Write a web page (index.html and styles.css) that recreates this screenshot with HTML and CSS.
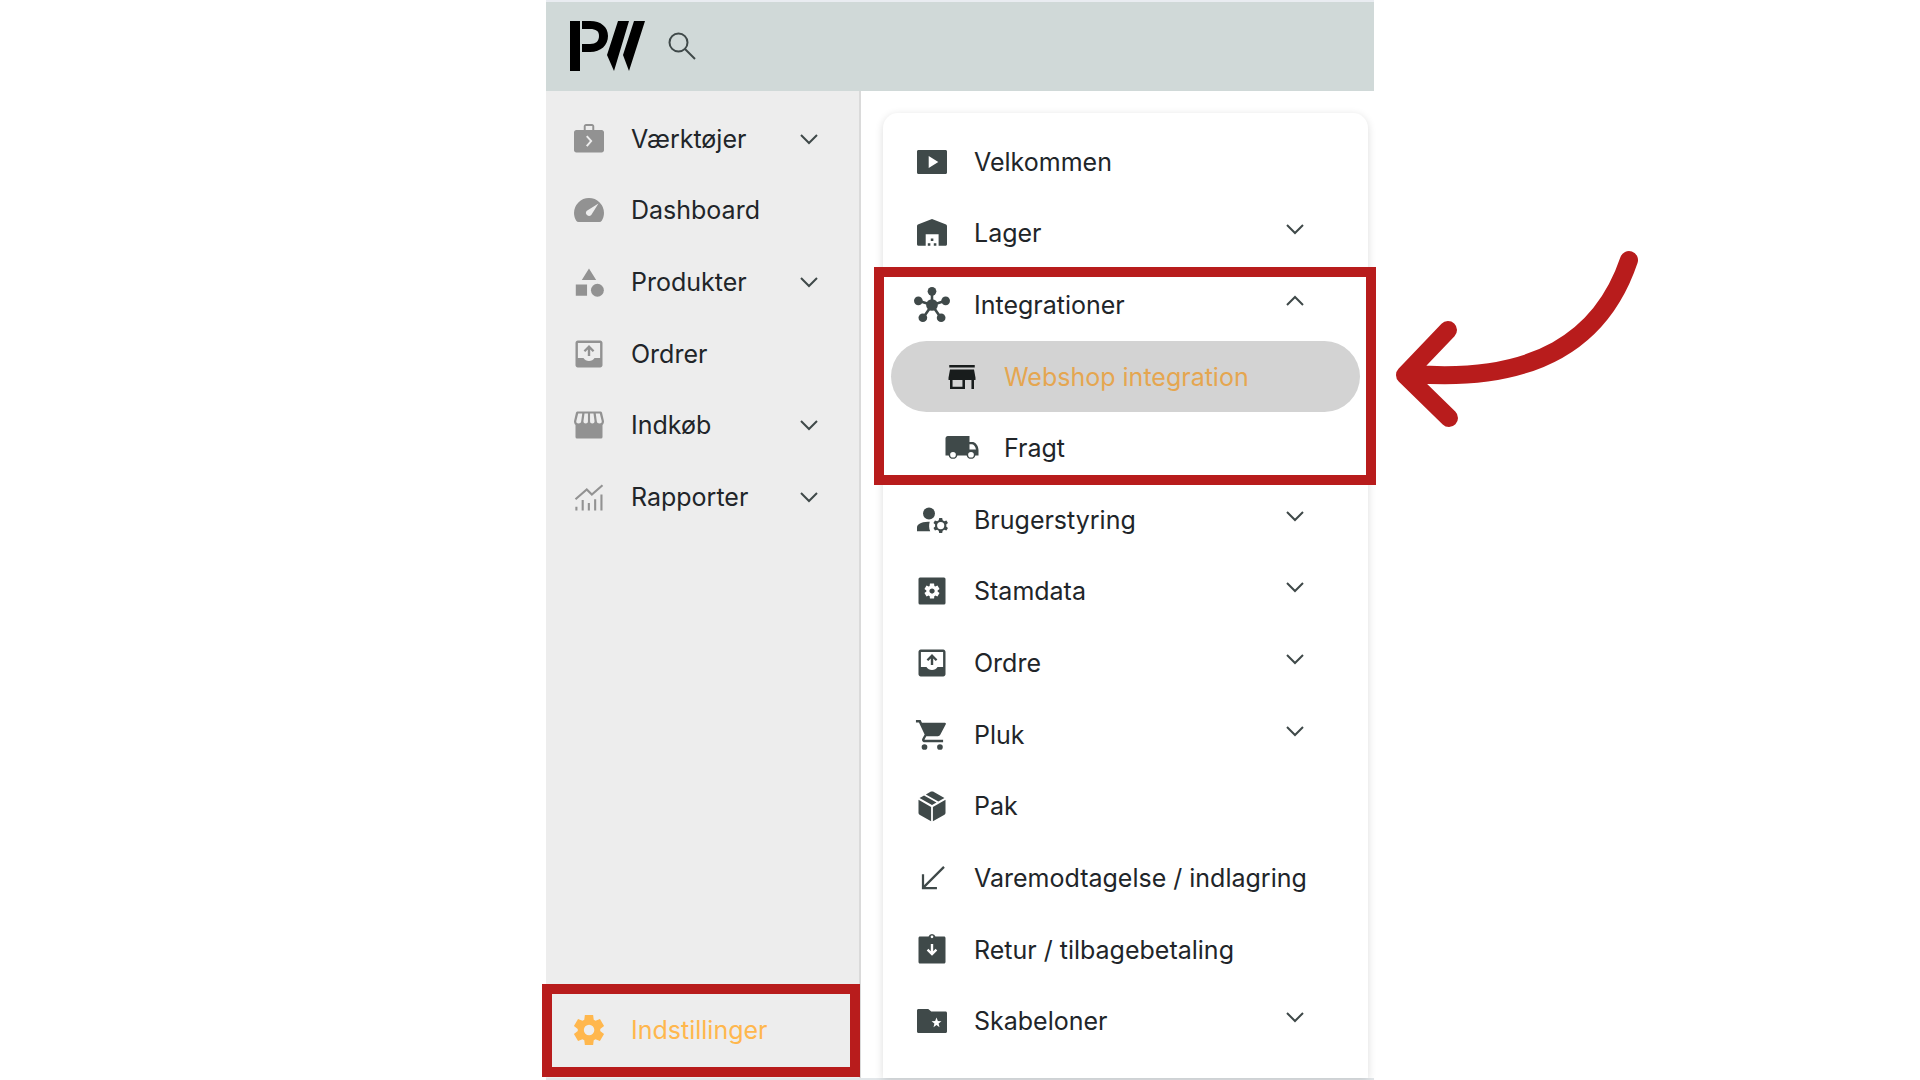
FILE: index.html
```html
<!DOCTYPE html>
<html lang="da">

<head>
    <meta charset="UTF-8">
    <meta name="viewport" content="width=device-width, initial-scale=1.0">
    <title>Webshop integration</title>
    <link rel="stylesheet" href="styles.css">
</head>

<body>

    <!-- Icon sprite -->
    <svg class="sprite" aria-hidden="true">
        <symbol id="tools" viewBox="0 0 24 24"><path fill-rule="evenodd" d="M8.5 6V3.5C8.5 2.700 9.200 2 10 2h4c.8 0 1.500.7 1.500 1.500V6h5c.8 0 1.500.7 1.500 1.500v12c0 .8-.7 1.500-1.500 1.500h-17C2.700 21 2 20.300 2 19.500v-12C2 6.700 2.700 6 3.500 6zM9.800 6h4.400V3.300H9.800zM10 16.300 12.600 13.400 10 10.500 11 9.600 14.300 13.400 11 17.200z"/></symbol>
        <symbol id="gauge" viewBox="0 0 24 24"><path fill-rule="evenodd" d="M12 4A10 10 0 0 0 2 14c0 1.900.6 3.800 1.500 5.200.4.5.9.8 1.500.8h14c.6 0 1.100-.3 1.500-.8.9-1.400 1.500-3.300 1.500-5.200A10 10 0 0 0 12 4zM18.300 7.700 13.500 15.300a2 2 0 1 1-2.900-2.800z"/></symbol>
        <symbol id="shapes" viewBox="0 0 24 24"><path d="M12 3l4.800 7.700H7.200zM3.200 13.700h7.500v7.500H3.200z"/><circle cx="17.600" cy="17.500" r="4.300"/></symbol>
        <symbol id="outbox" viewBox="0 0 24 24"><path fill-rule="evenodd" d="M4.500 3h15c.8 0 1.500.7 1.500 1.500v15c0 .8-.7 1.500-1.500 1.500h-15c-.8 0-1.500-.7-1.500-1.500v-15C3 3.700 3.700 3 4.500 3zM4.600 4.600v10h3.700c.8 1.200 2.100 2 3.700 2s2.900-.8 3.700-2h3.700v-10z"/><path d="M11.200 13.300V9l-1.700 1.700-1.100-1.100L12 6l3.600 3.600-1.100 1.100L12.800 9v4.300z"/></symbol>
        <symbol id="shop" viewBox="0 0 24 24"><path fill-rule="evenodd" d="M4.500 3h15c.6 0 1 .3 1.200.9L22 9.500c0 1-.3 1.800-1 2.500v8a1 1 0 0 1-1 1H4a1 1 0 0 1-1-1v-8c-.7-.7-1-1.500-1-2.500l1.300-5.600C3.500 3.300 4 3 4.500 3zM4.800 4.400 3.500 9.500c0 1 .5 1.500 1.500 1.500s1.700-.6 1.800-1.500l.7-5.100zM9 4.400l-.7 5.100c0 1 .6 1.500 1.500 1.500s1.500-.6 1.500-1.500V4.400zM12.700 4.400v5.100c0 .9.6 1.500 1.500 1.500s1.500-.5 1.500-1.500L15 4.400zM16.500 4.400l.7 5.100c.1.900.8 1.500 1.800 1.500s1.500-.5 1.500-1.500l-1.300-5.100z"/></symbol>
        <symbol id="chart" viewBox="0 0 24 24"><path fill="none" stroke="currentColor" stroke-width="1.400" d="M3 13.500 10.500 7l3.400 3.400L21 4.200M3.600 21v-2.500M7.800 21v-7M11.900 21v-5M16.100 21v-7.500M20.300 21V10.300"/></symbol>
        <symbol id="gear" viewBox="0 0 24 24"><path fill-rule="evenodd" d="m9.250 22l-.4-3.200q-.325-.125-.612-.3t-.563-.375L4.700 19.375l-2.750-4.750l2.575-1.950Q4.500 12.500 4.500 12.338v-.675q0-.163.025-.338L1.950 9.375l2.750-4.750l2.975 1.250q.275-.2.575-.375t.6-.3l.4-3.200h5.500l.4 3.200q.325.125.613.3t.562.375l2.975-1.250l2.750 4.750l-2.575 1.950q.025.175.025.338v.674q0 .163-.05.338l2.575 1.950l-2.750 4.750l-2.950-1.250q-.275.2-.575.375t-.6.3l-.4 3.200zm2.800-6.500q1.450 0 2.475-1.025T15.550 12t-1.025-2.475T12.050 8.500q-1.475 0-2.488 1.025T8.550 12t1.013 2.475T12.050 15.500z"/></symbol>
        <symbol id="play" viewBox="0 0 24 24"><path fill-rule="evenodd" d="M3 4h18c.6 0 1 .4 1 1v14c0 .6-.4 1-1 1H3c-.6 0-1-.4-1-1V5c0-.6.4-1 1-1zM9.800 8v8l6.400-4z"/></symbol>
        <symbol id="warehouse" viewBox="0 0 24 24"><path d="M12 2.700 21 6.200c.6.3 1 .7 1 1.300v12c0 .6-.4 1-1 1h-4.600v-7.700H7.800v7.700H3c-.6 0-1-.4-1-1v-12c0-.6.4-1 1-1.300z"/><path d="M11.200 15.700h1.700v1.700h-1.700zM9.200 18.800h1.700v1.700H9.200zM13.200 18.800h1.700v1.700h-1.700z"/></symbol>
        <symbol id="hub" viewBox="0 0 24 24"><path stroke="currentColor" stroke-width="1.700" fill="none" d="M12 12V3M12 12 3 9.200M12 12l9-2.800M12 12l-6 8.600M12 12l6 8.600"/><circle cx="12" cy="12" r="3.900"/><circle cx="12" cy="2.900" r="2.900"/><circle cx="2.900" cy="9.200" r="2.900"/><circle cx="21.100" cy="9.200" r="2.900"/><circle cx="5.900" cy="20.500" r="2.900"/><circle cx="18.100" cy="20.500" r="2.900"/></symbol>
        <symbol id="store" viewBox="0 0 24 24"><path fill-rule="evenodd" d="M20.500 4h-17v1.700h17zM21 14v-1.500L20 7H4l-1 5.500V14h1v6h10v-6h4.300v6H20v-6zM12.300 18.500H5.700V14h6.600z"/></symbol>
        <symbol id="truck" viewBox="0 0 24 24"><path fill-rule="evenodd" d="M2.500 4H17v4h2.500c1.900.5 3.500 2.900 3.500 5.500V17h-2.100a3 3 0 0 1-5.800 0H8.900a3 3 0 0 1-5.800 0H1V5.500C1 4.700 1.700 4 2.500 4zM17 9.500V13h4.300c-.3-1.900-1.300-3.200-2.600-3.500zM6 14.600a1.900 1.900 0 1 0 0 3.800 1.900 1.900 0 1 0 0-3.800zM18 14.600a1.900 1.900 0 1 0 0 3.800 1.900 1.900 0 1 0 0-3.800z"/></symbol>
        <symbol id="user" viewBox="0 0 24 24"><circle cx="10" cy="7.700" r="4"/><path d="M10.500 13.200C7.500 13 5.300 13.600 3.400 14.600 2.500 15.100 2 16 2 17v2.500h8.800c-.9-2-.9-4.300-.3-6.300z"/><path transform="translate(.8 -.3)" fill-rule="evenodd" d="M20.750 16c0-.22-.03-.42-.06-.63l1.140-1.010-1-1.730-1.450.49c-.32-.27-.68-.48-1.080-.63L18 11h-2l-.3 1.490c-.4.150-.76.360-1.080.63l-1.450-.49-1 1.730 1.140 1.010c-.03.210-.06.410-.06.630s.03.420.06.630l-1.140 1.010 1 1.730 1.450-.49c.32.270.68.480 1.080.63L16 21h2l.3-1.490c.4-.15.76-.36 1.080-.63l1.450.49 1-1.730-1.140-1.010c.03-.21.06-.41.06-.63zM17 18.400a2.400 2.400 0 1 1 0-4.800 2.400 2.400 0 0 1 0 4.800z"/></symbol>
        <symbol id="data" viewBox="0 0 24 24"><rect x="3" y="3" width="18" height="18" rx="1"/><use href="#gear" x="6" y="6" width="12" height="12" fill="#fff"/></symbol>
        <symbol id="cart" viewBox="0 0 24 24"><path d="M7 18.100a1.900 1.900 0 1 0 0 3.800 1.900 1.900 0 1 0 0-3.800zM17.300 18.100a1.900 1.900 0 1 0 0 3.800 1.900 1.900 0 1 0 0-3.800zM1.300 2v1.600h2l3.800 8-1.500 2.700c-.7 1.300.2 2.500 1.500 2.500h12.300v-1.600H7.400c-.3 0-.4-.2-.3-.4l1.100-2h7.700c.7 0 1.300-.3 1.600-.9L21.200 4.800c.2-.5 0-1-.6-1H5.300L4.400 2z"/></symbol>
        <symbol id="package" viewBox="0 0 24 24"><path d="M3 7.900l8.400 4.700v9.500L3.700 17.800c-.4-.3-.7-.7-.7-1.200zM21 7.900l-8.400 4.700v9.500l7.700-4.300c.4-.3.7-.7.7-1.200zM12 11.400 3.700 6.700l3-1.700 8.300 4.700zM16.200 9 7.900 4.300 11.300 2.400c.5-.2.9-.2 1.400 0l7.600 4.300z"/></symbol>
        <symbol id="inbound" viewBox="0 0 24 24"><path fill="none" stroke="currentColor" stroke-width="1.500" d="M20 4.600 6 18.600M6 9.500v9.200h9.300"/></symbol>
        <symbol id="return" viewBox="0 0 24 24"><path fill-rule="evenodd" d="M4 3h5.700a2.400 2.400 0 0 1 4.600 0H20c.6 0 1 .4 1 1v16c0 .6-.4 1-1 1H4c-.6 0-1-.4-1-1V4c0-.6.4-1 1-1zM12 2.300a.9.900 0 1 0 0 1.800.9.900 0 1 0 0-1.800zM11.200 8v4.800l-1.600-1.600-1.100 1.100L12 15.800l3.500-3.500-1.100-1.100-1.600 1.600V8z"/></symbol>
        <symbol id="folder" viewBox="0 0 24 24"><path fill-rule="evenodd" d="M3 4h6.500l2 1.600H21c.6 0 1 .4 1 1V19c0 .6-.4 1-1 1H3c-.6 0-1-.4-1-1V5c0-.6.4-1 1-1zM15 9.700l-.9 2.300-2.400.1 1.900 1.600-.6 2.400 2-1.400 2 1.400-.6-2.400 1.900-1.600-2.400-.1z"/></symbol>
        <symbol id="down" viewBox="0 0 18 18"><path fill="none" stroke="currentColor" stroke-width="2" d="M1 5l8 8 8-8"/></symbol>
        <symbol id="up" viewBox="0 0 18 18"><path fill="none" stroke="currentColor" stroke-width="2" d="M1 13l8-8 8 8"/></symbol>
    </svg>

    <div class="app">

        <header class="topbar">
            <svg class="logo" viewBox="0 0 75 50" role="img" aria-label="PW">
                <path d="M0 0h10v50H0zM12 0h8c11 0 18 6 18 15s-7 16-18 16h-8v-8h8c6 0 9-3 9-8s-3-7-9-7h-8zM48 0h11L44 50 37 34zM64 0h11L59 50 53 34z"/>
            </svg>
            <button class="search" aria-label="Søg">
                <svg viewBox="0 0 28 28"><circle cx="10.500" cy="10.500" r="9"/><path d="M17 17l10 10"/></svg>
            </button>
        </header>

        <div class="content">
            <nav class="sidebar">
                <button class="item"><svg class="icon"><use href="#tools"/></svg><span>Værktøjer</span><svg class="chevron"><use href="#down"/></svg></button>
                <a class="item" href="#"><svg class="icon"><use href="#gauge"/></svg><span>Dashboard</span></a>
                <button class="item"><svg class="icon"><use href="#shapes"/></svg><span>Produkter</span><svg class="chevron"><use href="#down"/></svg></button>
                <a class="item" href="#"><svg class="icon"><use href="#outbox"/></svg><span>Ordrer</span></a>
                <button class="item"><svg class="icon"><use href="#shop"/></svg><span>Indkøb</span><svg class="chevron"><use href="#down"/></svg></button>
                <button class="item"><svg class="icon"><use href="#chart"/></svg><span>Rapporter</span><svg class="chevron"><use href="#down"/></svg></button>
                <div class="spacer"></div>
                <a class="item settings" href="#"><svg class="icon"><use href="#gear"/></svg><span>Indstillinger</span></a>
            </nav>

            <main class="main">
                <nav class="card">
                    <a class="item" href="#"><svg class="icon"><use href="#play"/></svg><span>Velkommen</span></a>
                    <button class="item"><svg class="icon"><use href="#warehouse"/></svg><span>Lager</span><svg class="chevron"><use href="#down"/></svg></button>

                    <div class="group">
                        <button class="item"><svg class="icon"><use href="#hub"/></svg><span>Integrationer</span><svg class="chevron"><use href="#up"/></svg></button>
                        <a class="item sub active" href="#"><svg class="icon"><use href="#store"/></svg><span>Webshop integration</span></a>
                        <a class="item sub" href="#"><svg class="icon"><use href="#truck"/></svg><span>Fragt</span></a>
                    </div>

                    <button class="item"><svg class="icon"><use href="#user"/></svg><span>Brugerstyring</span><svg class="chevron"><use href="#down"/></svg></button>
                    <button class="item"><svg class="icon"><use href="#data"/></svg><span>Stamdata</span><svg class="chevron"><use href="#down"/></svg></button>
                    <button class="item"><svg class="icon"><use href="#outbox"/></svg><span>Ordre</span><svg class="chevron"><use href="#down"/></svg></button>
                    <button class="item"><svg class="icon"><use href="#cart"/></svg><span>Pluk</span><svg class="chevron"><use href="#down"/></svg></button>
                    <a class="item" href="#"><svg class="icon"><use href="#package"/></svg><span>Pak</span></a>
                    <a class="item" href="#"><svg class="icon"><use href="#inbound"/></svg><span>Varemodtagelse / indlagring</span></a>
                    <a class="item" href="#"><svg class="icon"><use href="#return"/></svg><span>Retur / tilbagebetaling</span></a>
                    <button class="item"><svg class="icon"><use href="#folder"/></svg><span>Skabeloner</span><svg class="chevron"><use href="#down"/></svg></button>
                </nav>
            </main>
        </div>

        <svg class="arrow" viewBox="0 0 260 200" aria-hidden="true">
            <path d="M249 30C222 110 155 153 34 144M68 100 25 145l44 43"/>
        </svg>
    </div>

</body>

</html>
```

FILE: styles.css
```css
* {
    box-sizing: border-box;
}

body {
    margin: 0;
    background: #fff;
    color: #212529;
    font-family: Inter, "Liberation Sans", sans-serif;
    font-size: 25px;
    line-height: 32px;
}

.sprite {
    display: none;
}

.app {
    position: relative;
    display: flex;
    flex-direction: column;
    max-width: 828px;
    min-height: 100vh;
    margin: 0 auto;
    border-top: 2px solid #e9ecf1;
    border-bottom: 2px solid #e2e6e9;
}

/* Top bar */
.topbar {
    display: flex;
    align-items: center;
    gap: 23px;
    padding: 19px 24px 20px;
    background: #d0d9d8;
}

.logo {
    width: 75px;
    height: 50px;
}

.search {
    padding: 0;
    border: 0;
    background: none;
    line-height: 0;
    cursor: pointer;
}

.search svg {
    width: 28px;
    height: 28px;
    fill: none;
    stroke: #3f4949;
    stroke-width: 2;
}

.content {
    display: flex;
    flex: 1;
}

/* Menu rows, used in the sidebar and in the card */
.item {
    position: relative;
    display: flex;
    flex: 1 0 0;
    align-items: center;
    gap: 24px;
    width: 100%;
    padding: 0 0 0 25px;
    border: 0;
    background: none;
    color: inherit;
    font: inherit;
    text-align: left;
    text-decoration: none;
    white-space: nowrap;
    cursor: pointer;
}

.icon {
    flex: none;
    width: 36px;
    height: 36px;
    color: #3f4949;
    fill: currentColor;
}

.chevron {
    width: 18px;
    height: 18px;
    margin-right: 41px;
    margin-left: auto;
    color: #3f4949;
}

/* Sidebar */
.sidebar {
    display: flex;
    flex: none;
    flex-direction: column;
    width: 315px;
    padding: 12px 0;
    border-right: 2px solid #dadada;
    background: #ededed;
}

.sidebar .icon {
    color: #929292;
}

.spacer {
    flex: 6 0 0;
    margin-bottom: 32px;
}

.sidebar .settings,
.sidebar .settings .icon {
    color: #ffb74d;
}

/* Red frames */
.settings::after,
.group::after {
    content: "";
    position: absolute;
    inset: -10px -1px -11px -4px;
    border: 10px solid #b81c1c;
    pointer-events: none;
}

.group::after {
    inset: -2px -16px -1px -17px;
}

/* Settings card */
.main {
    display: flex;
    flex: 1;
    padding: 22px 6px 0 22px;
}

.card {
    display: flex;
    flex: 1;
    flex-direction: column;
    padding: 13px 8px 21px;
    border-radius: 15px 15px 0 0;
    box-shadow: 0 2px 8px rgba(0, 0, 0, 0.14);
}

.card .item {
    padding-left: 23px;
}

.card .chevron {
    margin-right: 56px;
    margin-bottom: 8px;
}

.group {
    position: relative;
    display: flex;
    flex: 3 0 0;
    flex-direction: column;
}

.card .sub {
    padding-left: 53px;
}

.card .active {
    border-radius: 36px;
    background: #d3d3d3;
    color: #e5a650;
}

.active .icon {
    color: #181c1c;
}

.arrow {
    position: absolute;
    top: 228px;
    left: 100%;
    width: 260px;
    height: 200px;
    margin-left: 6px;
    fill: none;
    stroke: #b81c1c;
    stroke-width: 18;
    stroke-linecap: round;
    stroke-linejoin: round;
}
```
